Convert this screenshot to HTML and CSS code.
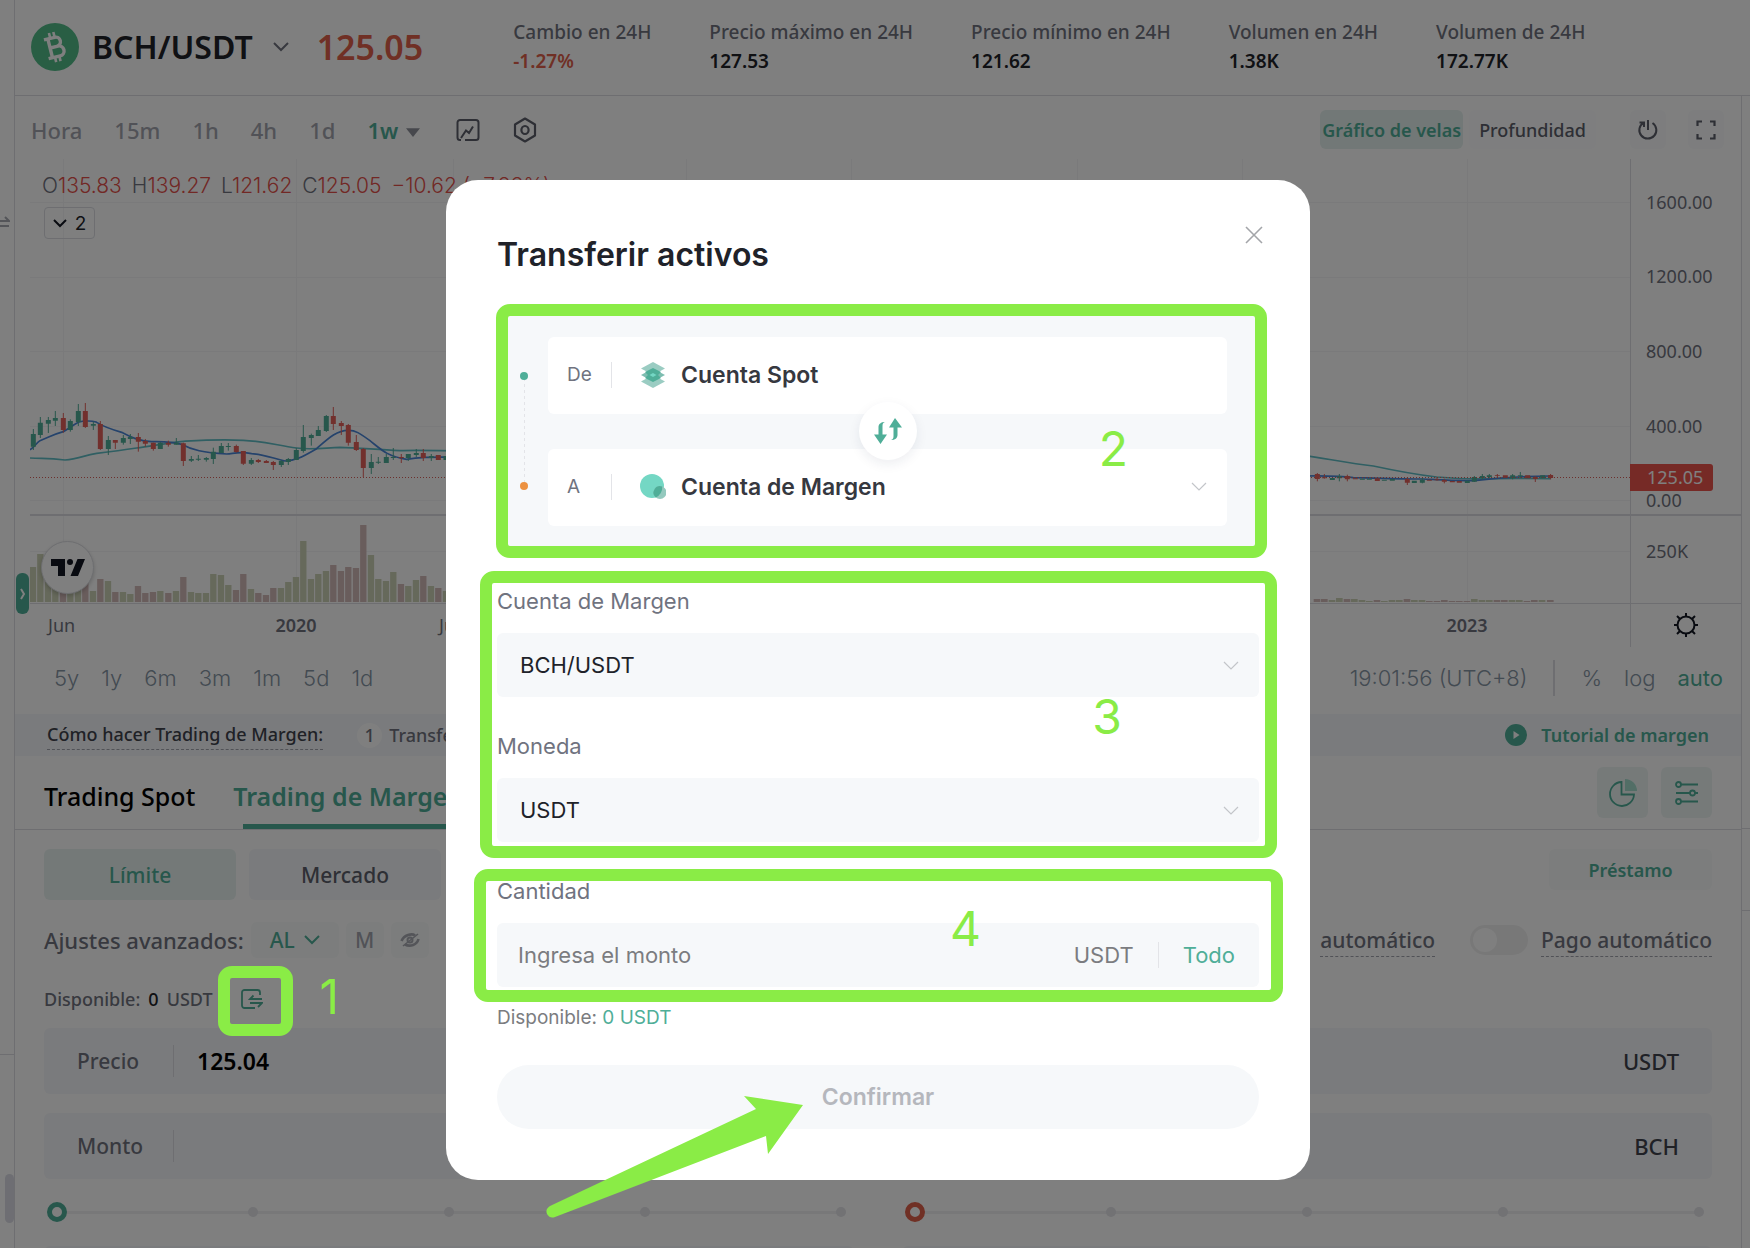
FILE: index.html
```
<!DOCTYPE html>
<html lang="es">
<head>
    <meta charset="UTF-8">
    <meta name="viewport" content="width=device-width, initial-scale=1.0">
    <title>BCH/USDT | Trading de Margen</title>
    <link rel="stylesheet" href="styles.css">
</head>
<body>
    <div class="rail-left">
        <svg class="rail-icon" width="10" height="14" viewBox="0 0 10 14"><path d="M0 5H9L5 1M0 10H9" fill="none" stroke="#a9abb3" stroke-width="2"/></svg>
        <span class="rail-line"></span>
        <span class="rail-thumb"></span>
    </div>

    <div class="page">
        <header class="header">
            <svg class="coin" width="48" height="48" viewBox="0 0 48 48">
                <circle cx="24" cy="24" r="24" fill="#52bc89"/>
                <g transform="rotate(-14 24 24)" fill="none" stroke="#fff" stroke-width="3.4">
                    <path d="M15 14.5H26a4.6 4.6 0 0 1 0 9.3H19M26 23.800h1a5 5 0 0 1 0 10H15M19 14.500V33.800"/>
                    <path d="M21.500 9V14M26 9V14M21.500 34V39M26 34V39" stroke-width="2.6"/>
                </g>
            </svg>
            <h1 class="pair">BCH/USDT</h1>
            <svg class="pair-arrow" width="18" height="12" viewBox="0 0 18 12"><path d="M2 2l7 7 7-7" fill="none" stroke="#70737f" stroke-width="2"/></svg>
            <span class="last-price">125.05</span>
            <dl class="stats">
                <div><dt>Cambio en 24H</dt><dd class="down">-1.27%</dd></div>
                <div><dt>Precio máximo en 24H</dt><dd>127.53</dd></div>
                <div><dt>Precio mínimo en 24H</dt><dd>121.62</dd></div>
                <div><dt>Volumen en 24H</dt><dd>1.38K</dd></div>
                <div><dt>Volumen de 24H</dt><dd>172.77K</dd></div>
            </dl>
        </header>

        <main class="main">
            <div class="toolbar">
                <div class="intervals">
                    <button type="button">Hora</button>
                    <button type="button">15m</button>
                    <button type="button">1h</button>
                    <button type="button">4h</button>
                    <button type="button">1d</button>
                    <button type="button" class="active">1w <svg width="14" height="9" viewBox="0 0 16 10"><path d="M0 0H16L8 10z" fill="#8e919b"/></svg></button>
                </div>
                <button type="button" class="tool" aria-label="Indicadores">
                    <svg width="24" height="24" viewBox="0 0 24 24" fill="none" stroke="#5c5f6b" stroke-width="2"><path d="M5 22H4a2.500 2.500 0 0 1-2.500-2.500V4.500A2.500 2.500 0 0 1 4 2H20a2.500 2.500 0 0 1 2.500 2.500V19.500A2.500 2.500 0 0 1 20 22H9M5 20L10 12.500 13 15 17 8.500"/></svg>
                </button>
                <button type="button" class="tool" aria-label="Ajustes del gráfico">
                    <svg width="24" height="26" viewBox="0 0 24 26" fill="none" stroke="#5c5f6b" stroke-width="2.200"><path d="M12 1.500L22 7.500V18.500L12 24.500 2 18.500V7.500z" stroke-linejoin="round"/><ellipse cx="12" cy="13" rx="3.600" ry="4"/></svg>
                </button>
                <div class="views">
                    <button type="button" class="view active">Gráfico de velas</button>
                    <button type="button" class="view">Profundidad</button>
                    <button type="button" class="square" aria-label="Restablecer">
                        <svg width="22" height="22" viewBox="0 0 22 22" fill="none" stroke="#5c5f6b" stroke-width="2"><path d="M11 1V11M15.500 4a8.500 8.500 0 1 1-9-.2M2.500 3.500H7V8"/></svg>
                    </button>
                    <button type="button" class="square" aria-label="Pantalla completa">
                        <svg width="20" height="20" viewBox="0 0 20 20" fill="none" stroke="#5c5f6b" stroke-width="2.200"><path d="M1.500 6V1.500H6M14 1.500H18.500V6M18.500 14V18.500H14M6 18.500H1.500V14"/></svg>
                    </button>
                </div>
            </div>

            <section class="chart">
                <svg class="chart-svg" viewBox="0 0 1711 488">
                    <!-- grid -->
                    <path d="M33.500 0V444M266.500 0V444M423.500 0V444M656.500 0V444M821.500 0V444M1047.500 0V444M1212.500 0V444M1437.500 0V444M0 43.500H1600M0 118.500H1600M0 192.500H1600M0 267.500H1600M0 341.500H1600M0 392.500H1600" stroke="#f4f4f6" fill="none"/>

                    <!-- volume, left part -->
                    <g transform="translate(-30 221) scale(.3333)" fill="none" stroke-width="19">
                        <path stroke="#ccd2b6" d="M99 666V561M121 666V522M144 666V600M166 666V590M211 666V600M234 666V590M279 666V633M324 666V603M369 666V636M391 666V642M481 666V633M528 666V633M573 666V636M595 666V639M618 666V639M640 666V582M663 666V585M685 666V615M753 666V627M843 666V624M865 666V606M888 666V591M910 666V483M933 666V597M955 666V582M978 666V573M1113 666V525M1135 666V597M1158 666V603M1180 666V576M1225 666V618M1248 666V600M1293 666V618M1338 666V633"/>
                        <path stroke="#d3bab9" d="M189 666V610M256 666V600M301 666V597M346 666V636M414 666V618M436 666V639M459 666V636M505 666V639M550 666V591M708 666V630M730 666V582M775 666V639M798 666V645M820 666V624M1000 666V555M1023 666V573M1045 666V561M1068 666V564M1090 666V435M1203 666V612M1270 666V588M1315 666V624"/>
                    </g>

                    <!-- volume, right part -->
                    <g transform="translate(1260 281) scale(.3333)" fill="none" stroke-width="20">
                        <path stroke="#ccd2b6" d="M126 486V480M148 486V474M193 486V477M216 486V480M238 486V483M283 486V483M306 486V480M328 486V480M373 486V480M396 486V480M553 486V477M576 486V480M598 486V480M666 486V480M688 486V480M756 486V480"/>
                        <path stroke="#d3bab9" d="M81 486V477M103 486V477M171 486V477M261 486V480M351 486V477M418 486V483M441 486V483M463 486V480M486 486V483M508 486V483M531 486V483M621 486V480M643 486V480M711 486V483M733 486V480M781 486V480"/>
                    </g>

                    <!-- moving averages and candles, left part -->
                    <g transform="translate(-30 221) scale(.3333)" fill="none">
                        <path stroke="#60bfc6" stroke-width="5" d="M90 234C125 237 140 233 195 240C235 238 250 226 290 220C340 214 370 210 410 204C450 200 500 188 550 184C600 181 660 177 730 181C800 184 830 196 890 204C930 210 970 204 1020 202C1070 203 1120 208 1200 212C1250 210 1300 212 1400 213"/>
                        <path stroke="#4a86d8" stroke-width="5" d="M90 209C100 205 108 190 120 182C145 173 160 163 190 155C205 147 215 138 235 127C250 122 275 122 288 126C305 136 315 143 365 157C390 170 415 183 455 185C490 184 520 186 545 193C575 210 610 218 680 222C705 220 720 214 755 221C790 224 810 232 855 243C885 242 900 235 950 206C980 180 1010 150 1045 151C1065 150 1080 160 1110 182C1145 210 1160 228 1220 238C1250 232 1280 230 1400 232"/>
                        <path stroke="#4fae98" stroke-width="3" d="M100 147V210M121 111V174M145 111V159M166 93V138M211 118V155M235 72V138M280 125V150M325 168V225M370 165V194M391 162V192M481 186V207M529 174V194M574 228V246M595 225V243M619 231V245M640 203V252M664 189V219M685 189V212M754 234V255M844 240V261M865 234V255M889 204V240M910 135V218M934 161V197M955 138V168M979 105V156M1114 222V282M1135 231V252M1159 222V249M1180 204V240M1225 222V243M1249 207V231M1294 222V243"/>
                        <path stroke="#e4605a" stroke-width="3" d="M190 99V158M256 69V144M301 123V210M346 180V207M415 159V215M436 177V200M460 188V212M505 182V200M550 188V258M709 194V218M730 213V255M775 237V249M799 240V249M820 243V270M1000 81V150M1024 123V165M1045 132V197M1069 165V213M1090 204V291M1204 222V249M1270 207V243"/>
                        <path stroke="#4fae98" stroke-width="15" d="M100 162V200M121 128V165M145 120V131M166 114V122M211 123V150M235 93V126M280 132V137M325 180V207M370 174V188M391 171V177M481 188V207M529 188V194M574 237V242M595 236V239M619 234V239M640 215V237M664 198V219M685 198V201M754 240V251M844 243V255M865 237V246M889 210V240M910 171V213M934 165V174M955 150V168M979 108V153M1114 246V264M1135 245V248M1159 231V249M1180 231V234M1225 222V234M1249 219V225M1294 228V234M1338 228V240"/>
                        <path stroke="#e4605a" stroke-width="15" d="M190 114V150M256 93V141M301 132V207M346 180V188M415 171V185M436 183V191M460 188V207M505 188V194M550 190V243M709 198V216M730 213V251M775 240V246M799 243V249M820 246V255M1000 108V132M1024 129V138M1045 135V188M1069 186V210M1090 207V264M1204 231V234M1270 219V234M1315 225V240"/>
                    </g>

                    <!-- moving averages and candles, right part -->
                    <g transform="translate(1260 281) scale(.3333)" fill="none">
                        <path stroke="#60bfc6" stroke-width="5" d="M40 46C110 56 180 70 250 78C320 93 380 104 440 111C500 116 540 119 600 116C660 114 720 115 782 116"/>
                        <path stroke="#4a86d8" stroke-width="5" d="M40 108C100 107 150 107 190 113C260 114 340 117 400 117C460 120 520 124 560 121C620 114 680 108 782 108"/>
                        <path stroke="#4fae98" stroke-width="3" d="M148 102V124M397 114V130M553 108V126M577 102V119M598 102V114M691 96V114M668 102V118"/>
                        <path stroke="#e4605a" stroke-width="3" d="M82 99V124M103 102V116M172 104V124M352 112V135M441 112V122M463 116V130M622 102V114M736 108V126M782 102V118"/>
                        <path stroke="#4fae98" stroke-width="15" d="M127 114V120M148 109V115M217 116V119M238 116V119M283 119V122M307 117V122M373 122V129M397 119V128M532 122V129M553 111V125M577 108V114M598 106V111M668 106V115M691 106V109M758 106V115"/>
                        <path stroke="#e4605a" stroke-width="15" d="M82 102V117M103 112V115M172 108V118M196 115V118M262 115V123M352 117V128M418 119V122M441 118V121M463 120V125M487 123V127M508 123V128M622 106V108M646 106V113M713 106V115M736 111V117M782 105V114"/>
                    </g>

                    <path d="M0 318.500H1600" stroke="#d8605a" stroke-dasharray="1 2"/>
                    <path d="M0 356H1711" stroke="#dcdde2" stroke-width="2"/>
                    <path d="M0 444.500H1711M1600.500 0V488" stroke="#dcdde2"/>

                    <!-- price scale -->
                    <g class="axis-text">
                        <text x="1616" y="50">1600.00</text>
                        <text x="1616" y="124">1200.00</text>
                        <text x="1616" y="199">800.00</text>
                        <text x="1616" y="274">400.00</text>
                        <text x="1616" y="348">0.00</text>
                        <text x="1616" y="399">250K</text>
                        <text x="18" y="473">Jun</text>
                        <text x="409" y="473">Jun</text>
                    </g>
                    <g class="axis-text axis-year">
                        <text x="266" y="473" text-anchor="middle">2020</text>
                        <text x="1437" y="473" text-anchor="middle">2023</text>
                    </g>
                    <path d="M1600 305H1680a3 3 0 0 1 3 3V329a3 3 0 0 1-3 3H1600z" fill="#ec544d"/>
                    <text class="axis-text axis-last" x="1617" y="325">125.05</text>
                    <g transform="translate(1656 466)" fill="none" stroke="#131722" stroke-width="2">
                        <circle r="8.500"/>
                        <path d="M0-8V-12M0 8V12M-8 0H-12M8 0H12M-6-6L-9-9M6-6L9-9M-6 6L-9 9M6 6L9 9"/>
                    </g>
                </svg>
                <p class="legend"><span>O<b>135.83</b></span><span>H<b>139.27</b></span><span>L<b>121.62</b></span><span>C<b>125.05</b></span><b>−10.62 (−7.83%)</b></p>
                <button type="button" class="legend-toggle"><svg width="14" height="9" viewBox="0 0 14 9"><path d="M1 1l6 6 6-6" fill="none" stroke="#131722" stroke-width="2"/></svg>2</button>
                <a class="tv-logo" href="#" aria-label="TradingView">
                    <svg width="34" height="17" viewBox="0 0 34 17" fill="#131722"><path d="M0 0H14V17H7V7H0zM26.500 0H34L27 17H19.500z"/><circle cx="19" cy="3" r="3"/></svg>
                </a>
                <button type="button" class="drawer" aria-label="Mostrar herramientas"><svg width="6" height="12" viewBox="0 0 6 12"><path d="M1 1l3 5-3 5" fill="none" stroke="#fff" stroke-width="2"/></svg></button>
            </section>

            <div class="ranges">
                <button type="button">5y</button>
                <button type="button">1y</button>
                <button type="button">6m</button>
                <button type="button">3m</button>
                <button type="button">1m</button>
                <button type="button">5d</button>
                <button type="button">1d</button>
                <span class="clock">19:01:56 (UTC+8)</span>
                <button type="button">%</button>
                <button type="button">log</button>
                <button type="button" class="active">auto</button>
            </div>

            <div class="guide">
                <span class="guide-title">Cómo hacer Trading de Margen:</span>
                <span class="guide-step">1</span>
                <span>Transferir</span>
                <a class="guide-link" href="#">
                    <svg width="22" height="22" viewBox="0 0 22 22"><circle cx="11" cy="11" r="11" fill="#4fae98"/><path d="M8.500 7L14.500 11 8.500 15z" fill="#fff"/></svg>
                    Tutorial de margen
                </a>
            </div>

            <nav class="tabs">
                <button type="button" class="tab">Trading Spot</button>
                <button type="button" class="tab active">Trading de Margen</button>
                <div class="tab-tools">
                    <button type="button" aria-label="Cartera">
                        <svg width="28" height="28" viewBox="0 0 28 28"><path d="M12.500 3A12 12 0 1 0 25 15.500H12.500z" fill="none" stroke="#4fae98" stroke-width="1.800"/><path d="M16 0A12 12 0 0 1 28 12H16z" fill="#a5dccd"/></svg>
                    </button>
                    <button type="button" aria-label="Preferencias">
                        <svg width="24" height="24" viewBox="0 0 24 24" fill="none" stroke="#4fae98" stroke-width="1.800"><path d="M6 3.500H23M1 12H15M20 12H23M6 20.500H23"/><circle cx="3.500" cy="3.500" r="2.500"/><circle cx="17.500" cy="12" r="2.500"/><circle cx="3.500" cy="20.500" r="2.500"/></svg>
                    </button>
                </div>
            </nav>

            <section class="trade">
                <div class="order-types">
                    <button type="button" class="order-type active">Límite</button>
                    <button type="button" class="order-type">Mercado</button>
                    <button type="button" class="loan">Préstamo</button>
                </div>
                <div class="advanced">
                    <span class="advanced-title">Ajustes avanzados:</span>
                    <button type="button" class="chip chip-al">AL <svg width="16" height="10" viewBox="0 0 16 10"><path d="M1 1l7 7 7-7" fill="none" stroke="#4fae98" stroke-width="2"/></svg></button>
                    <button type="button" class="chip">M</button>
                    <button type="button" class="chip" aria-label="Ocultar">
                        <svg width="20" height="14" viewBox="0 0 20 14" fill="none" stroke="#a9abb3" stroke-width="2.600"><path d="M1.500 8C4 2 12 0 15 2.500M5 11.500C10 14 17 12 18.500 6"/><path d="M3 13L18 1" stroke-width="1.600"/><circle cx="10" cy="7" r="2.500" stroke-width="2"/></svg>
                    </button>
                    <div class="auto">
                        <label class="switch"><input type="checkbox"><span>automático</span></label>
                        <label class="switch"><input type="checkbox"><span>Pago automático</span></label>
                    </div>
                </div>

                <div class="forms">
                    <form class="form">
                        <div class="available">Disponible: <b>0</b> USDT
                            <button type="button" class="transfer" aria-label="Transferir">
                                <svg width="22" height="20" viewBox="0 0 22 20" fill="none" stroke="#4fae98" stroke-width="1.800"><path d="M19 6V3.500A2.500 2.500 0 0 0 16.500 1H3.500A2.500 2.500 0 0 0 1 3.500V16.500A2.500 2.500 0 0 0 3.500 19H14"/><path d="M21 10H9L12.500 6.500M9 14H21L17 18"/></svg>
                                <span class="mark mark-transfer"></span>
                                <span class="mark-number number-1">1</span>
                            </button>
                        </div>
                        <div class="field"><label for="price">Precio</label><input id="price" type="text" value="125.04"></div>
                        <div class="field"><label for="amount">Monto</label><input id="amount" type="text"></div>
                        <div class="slider">
                            <div class="ticks"><i></i><i></i><i></i><i></i><i></i></div>
                            <input type="range" min="0" max="100" value="0" aria-label="Porcentaje de compra">
                        </div>
                        <div class="field"><input type="text" aria-label="Total de compra"></div>
                    </form>
                    <form class="form">
                        <div class="available"></div>
                        <div class="field"><input type="text" aria-label="Precio de venta"><span>USDT</span></div>
                        <div class="field"><input type="text" aria-label="Monto de venta"><span>BCH</span></div>
                        <div class="slider sell">
                            <div class="ticks"><i></i><i></i><i></i><i></i><i></i></div>
                            <input type="range" min="0" max="100" value="0" aria-label="Porcentaje de venta">
                        </div>
                        <div class="field"><input type="text" aria-label="Total de venta"></div>
                    </form>
                </div>
            </section>
        </main>
    </div>

    <div class="rail-right"><span></span></div>

    <div class="overlay">
        <div class="modal" role="dialog" aria-labelledby="modal-title">
            <button type="button" class="close" aria-label="Cerrar"><svg width="18" height="18" viewBox="0 0 18 18"><path d="M1 1L17 17M17 1L1 17" fill="none" stroke="#a3a5a9" stroke-width="1.600"/></svg></button>
            <h2 id="modal-title">Transferir activos</h2>

            <div class="accounts">
                <div class="route"><i class="from"></i><i class="to"></i></div>
                <div class="account">
                    <span class="way">De</span>
                    <svg width="26" height="26" viewBox="0 0 26 26">
                        <path d="M13 0L25 6.500 13 13 1 6.500z" fill="#9accc2"/>
                        <path d="M13 13L25 19.500 13 26 1 19.500z" fill="#9accc2"/>
                        <path d="M13 6.500L25 13 13 19.500 1 13z" fill="#7dbdb0"/>
                        <path d="M13 6L21 10 18 13 21 16 13 20 5 16 8 13 5 10z" fill="#4fae98"/>
                        <path d="M13 11L16.500 13 13 15 9.500 13z" fill="#74d7c4"/>
                    </svg>
                    <strong>Cuenta Spot</strong>
                </div>
                <div class="account">
                    <label class="way" for="to-account">A</label>
                    <svg width="26" height="26" viewBox="0 0 26 26">
                        <circle cx="12" cy="12" r="12" fill="#74d7c4"/>
                        <circle cx="20" cy="18.500" r="6.500" fill="#94c9be"/>
                        <path d="M22.300 12.400A12 12 0 0 1 15.800 23.400A6.500 6.500 0 0 1 22.300 12.400" fill="#4fae98"/>
                    </svg>
                    <select id="to-account"><option>Cuenta de Margen</option></select>
                    <svg class="arrow" width="16" height="9" viewBox="0 0 16 9"><path d="M1 1l7 7 7-7" fill="none" stroke="#c3c5c9" stroke-width="1.200"/></svg>
                </div>
                <button type="button" class="swap" aria-label="Intercambiar cuentas">
                    <svg width="28" height="26" viewBox="0 0 28 26" fill="#4fae98"><path d="M11 4C9 4.500 8.500 6 8.500 8V16.500H13L6.500 26 0 16.500H4.500V9C4.500 6 7 4 11 4zM17 22C19 21.500 19.500 20 19.500 18V9.500H15L21 0 28 9.500H23.500V17C23.500 20 21 22 17 22z"/></svg>
                </button>
                <span class="mark mark-accounts"></span>
                <span class="mark-number number-2">2</span>
            </div>

            <div class="pickers">
                <label for="margin-account">Cuenta de Margen</label>
                <div class="picker">
                    <select id="margin-account"><option>BCH/USDT</option></select>
                    <svg class="arrow" width="16" height="9" viewBox="0 0 16 9"><path d="M1 1l7 7 7-7" fill="none" stroke="#c3c5c9" stroke-width="1.200"/></svg>
                </div>
                <label for="coin">Moneda</label>
                <div class="picker">
                    <select id="coin"><option>USDT</option></select>
                    <svg class="arrow" width="16" height="9" viewBox="0 0 16 9"><path d="M1 1l7 7 7-7" fill="none" stroke="#c3c5c9" stroke-width="1.200"/></svg>
                </div>
                <span class="mark mark-pickers"></span>
                <span class="mark-number number-3">3</span>
            </div>

            <div class="quantity">
                <label for="quantity">Cantidad</label>
                <div class="picker">
                    <input id="quantity" type="text" placeholder="Ingresa el monto">
                    <span class="unit">USDT</span>
                    <button type="button" class="all">Todo</button>
                </div>
                <span class="mark mark-quantity"></span>
                <span class="mark-number number-4">4</span>
            </div>

            <p class="balance">Disponible: <a href="#">0 USDT</a></p>
            <div class="submit">
                <button type="submit" class="confirm" disabled>Confirmar</button>
                <svg class="mark-arrow" width="258" height="124" viewBox="0 0 258 124"><path d="M257 10L198 1 210 14 4 111Q-1 114 1 119 4 124 9 122L220 41 222 59z" fill="#8aec46"/></svg>
            </div>
        </div>
    </div>
</body>
</html>
```

FILE: styles.css
```
* {
    box-sizing: border-box;
    margin: 0;
    padding: 0;
}

body {
    display: flex;
    height: 100vh;
    overflow: hidden;
    background-color: #fff;
    color: #202229;
    font-family: 'Noto Sans', 'Open Sans', sans-serif;
    font-size: 18px;
    font-weight: 500;
}

button, input, select {
    border: none;
    background: none;
    color: inherit;
    font: inherit;
    outline: none;
}

svg {
    flex: none;
}

a {
    text-decoration: none;
}

/* side rails */
.rail-left {
    position: relative;
    width: 15px;
    flex: none;
    border-right: 1px solid #dcdde2;
}

.rail-icon {
    position: absolute;
    top: 216px;
    left: 0;
}

.rail-line {
    position: absolute;
    top: 1054px;
    left: 0;
    width: 14px;
    height: 1px;
    background-color: #dcdde2;
}

.rail-thumb {
    position: absolute;
    top: 1174px;
    left: 5px;
    width: 9px;
    height: 49px;
    border-radius: 5px;
    background-color: #dcdde6;
}

.rail-right {
    width: 9px;
    flex: none;
    margin-top: 95px;
    border-top: 1px solid #dcdde2;
    border-left: 1px solid #dcdde2;
}

.rail-right span {
    display: block;
    height: 83px;
    margin-top: 732px;
    border: solid #dcdde2;
    border-width: 1px 0;
}

.page {
    flex: 1;
    min-width: 0;
    overflow: hidden;
}

/* header */
.header {
    display: flex;
    align-items: center;
    height: 96px;
    padding: 0 16px 2px;
    border-bottom: 1px solid #dcdde2;
    white-space: nowrap;
}

.pair {
    margin-left: 13px;
    font-size: 32px;
    font-weight: 600;
}

.pair-arrow {
    margin-left: 19px;
}

.last-price {
    margin-left: 27px;
    color: #e0604a;
    font-size: 34px;
    font-weight: 600;
}

.stats {
    display: flex;
    gap: 58px;
    margin-left: 90px;
    font-size: 19px;
    line-height: 29px;
}

.stats dt {
    color: #70737f;
}

.stats dd {
    font-weight: 600;
}

.stats .down {
    color: #e0604a;
}

/* chart toolbar */
.toolbar {
    display: flex;
    align-items: center;
    height: 63px;
    padding: 4px 17px 0 16px;
}

.intervals {
    display: flex;
    gap: 32px;
    margin-right: 36px;
    color: #a3a5ae;
    font-size: 22px;
}

.intervals .active {
    color: #4fae98;
    font-weight: 600;
}

.intervals svg {
    margin-left: 2px;
    vertical-align: 2px;
}

.tool {
    display: flex;
    margin-right: 33px;
}

.views {
    display: flex;
    margin-left: auto;
}

.view {
    height: 39px;
    margin-right: 12px;
    padding: 0 10px;
    border-radius: 6px;
    background-color: #fdfdfe;
    color: #5c5f6b;
}

.view.active {
    margin-right: 6px;
    padding: 0 2px;
    background-color: #e4f0ee;
    color: #4fae98;
    font-weight: 600;
}

.square {
    display: flex;
    align-items: center;
    justify-content: center;
    width: 36px;
    height: 39px;
    margin-left: 22px;
    border-radius: 6px;
    background-color: #fafbfd;
}

/* chart */
.chart {
    position: relative;
    padding-left: 15px;
}

.chart-svg {
    display: block;
    width: 100%;
}

.axis-text {
    fill: #70737f;
    font-size: 18px;
    font-weight: 400;
}

.axis-year {
    font-weight: 600;
}

.axis-last {
    fill: #fff;
}

.legend {
    position: absolute;
    top: 14px;
    left: 27px;
    display: flex;
    gap: 10px;
    color: #70737f;
    font-family: 'Inter', sans-serif;
    font-size: 21px;
    font-weight: 300;
    line-height: 26px;
}

.legend b {
    color: #e4504a;
    font-weight: 300;
}

.legend-toggle {
    position: absolute;
    top: 48px;
    left: 29px;
    display: flex;
    align-items: center;
    justify-content: center;
    gap: 8px;
    width: 51px;
    height: 32px;
    border: 1px solid #dcdde2;
    border-radius: 4px;
    font-family: 'Inter', sans-serif;
    font-size: 19px;
    font-weight: 400;
}

.tv-logo {
    position: absolute;
    top: 382px;
    left: 26px;
    display: flex;
    align-items: center;
    justify-content: center;
    width: 53px;
    height: 53px;
    border: 1px solid #dcdde2;
    border-radius: 50%;
    background-color: #fff;
    box-shadow: 0 2px 4px rgba(0, 0, 0, 0.2);
}

.drawer {
    position: absolute;
    top: 414px;
    left: 1px;
    display: flex;
    align-items: center;
    justify-content: center;
    width: 13px;
    height: 41px;
    border-radius: 6px;
    background-color: #4fae98;
}

.ranges {
    display: flex;
    align-items: center;
    gap: 22px;
    height: 67px;
    padding: 0 18px 6px 39px;
    color: #8796a5;
    font-family: 'Inter', sans-serif;
    font-size: 22px;
    font-weight: 300;
}

.ranges .active {
    color: #4fae98;
    font-weight: 400;
}

.clock {
    margin-left: auto;
    padding-right: 26px;
    border-right: 2px solid #dcdde2;
    line-height: 36px;
}

.ranges .clock + button {
    margin-left: 4px;
}

/* margin guide */
.guide {
    display: flex;
    align-items: center;
    height: 42px;
    padding: 0 32px;
    background-color: #f5f7fa;
    color: #70737f;
}

.guide-title {
    margin-right: 34px;
    border-bottom: 1px dashed #a3a5ae;
    color: #40434d;
    line-height: 29px;
}

.guide-step {
    width: 25px;
    margin-right: 7px;
    border-radius: 50%;
    background-color: #fff;
    line-height: 25px;
    text-align: center;
}

.guide-link {
    display: flex;
    align-items: center;
    gap: 14px;
    margin-left: auto;
    color: #4fae98;
    font-weight: 600;
}

/* spot / margin tabs */
.tabs {
    display: flex;
    height: 74px;
    padding: 0 29px;
    border-bottom: 1px solid #dcdde2;
    font-size: 25px;
}

.tab {
    margin-right: 38px;
    padding-top: 7px;
    color: #000;
    font-weight: 500;
}

.tab.active {
    position: relative;
    color: #4fae98;
    font-weight: 600;
}

.tab.active::after {
    content: '';
    position: absolute;
    right: 10px;
    bottom: 0;
    left: 10px;
    height: 5px;
    background-color: #4fae98;
}

.tab-tools {
    display: flex;
    gap: 13px;
    margin-top: 11px;
    margin-left: auto;
}

.tab-tools button {
    display: flex;
    align-items: center;
    justify-content: center;
    width: 51px;
    height: 51px;
    border-radius: 6px;
    background-color: #edf5f3;
}

/* order form */
.trade {
    padding: 19px 29px 0;
}

.order-types {
    display: flex;
    gap: 13px;
    font-size: 21px;
}

.order-type {
    width: 192px;
    height: 51px;
    border-radius: 6px;
    background-color: #f5f7fa;
    color: #5c5f6b;
}

.order-type.active {
    background-color: #e9f3f1;
    color: #4fae98;
}

.loan {
    width: 163px;
    height: 41px;
    margin-left: auto;
    border-radius: 6px;
    background-color: #f8fbfa;
    color: #4fae98;
    font-size: 18px;
    font-weight: 600;
}

.advanced {
    display: flex;
    align-items: center;
    gap: 7px;
    height: 36px;
    margin-top: 22px;
    color: #70737f;
    font-size: 21px;
}

.advanced-title {
    font-size: 22px;
}

.chip {
    display: flex;
    align-items: center;
    justify-content: center;
    min-width: 38px;
    height: 36px;
    border-radius: 6px;
    background-color: #f8fbfa;
    color: #a3a5ae;
}

.chip-al {
    gap: 9px;
    width: 88px;
    color: #4fae98;
}

.auto {
    display: flex;
    gap: 35px;
    margin-left: auto;
}

.switch {
    display: flex;
    align-items: center;
    gap: 13px;
}

.switch span {
    border-bottom: 1px dashed #a3a5ae;
    line-height: 32px;
}

.switch input {
    display: flex;
    align-items: center;
    width: 58px;
    height: 30px;
    padding: 0 3px;
    appearance: none;
    border-radius: 15px;
    background-color: #f1f1f1;
}

.switch input::before {
    content: '';
    width: 24px;
    height: 24px;
    border-radius: 50%;
    background-color: #fff;
}

.switch input:checked {
    justify-content: flex-end;
    background-color: #4fae98;
}

.forms {
    display: grid;
    grid-template-columns: 1fr 1fr;
    gap: 48px;
    margin-top: 24px;
}

.available {
    display: flex;
    align-items: center;
    gap: 8px;
    height: 34px;
    margin-bottom: 12px;
    color: #70737f;
}

.available b {
    color: #202229;
    font-weight: 500;
}

.transfer {
    position: relative;
    display: flex;
    margin-left: 20px;
}

.field {
    display: flex;
    align-items: center;
    height: 66px;
    margin-bottom: 19px;
    padding: 0 33px;
    border-radius: 6px;
    background-color: #f5f7fa;
    color: #40434d;
    font-size: 22px;
}

.field label {
    width: 97px;
    border-right: 1px solid #dcdde2;
    color: #70737f;
    font-size: 21px;
    line-height: 32px;
}

.field input {
    flex: 1;
    min-width: 0;
    padding-left: 23px;
    color: #000;
    font-size: 23px;
    font-weight: 600;
}

.slider {
    display: grid;
    align-items: center;
    height: 28px;
    margin: 0 3px 20px;
}

.ticks, .slider input {
    grid-area: 1 / 1;
}

.ticks {
    display: flex;
    justify-content: space-between;
    padding: 0 5px;
    background: linear-gradient(#f0f0f2, #f0f0f2) center / calc(100% - 20px) 3px no-repeat;
}

.ticks i {
    width: 10px;
    height: 10px;
    border-radius: 50%;
    background-color: #e4e4e9;
}

.slider input {
    width: 100%;
    height: 20px;
    appearance: none;
}

.slider input::-webkit-slider-thumb {
    width: 20px;
    height: 20px;
    appearance: none;
    border: 5px solid #4fae98;
    border-radius: 50%;
    background-color: #fff;
}

.sell input::-webkit-slider-thumb {
    border-color: #e0604a;
}

/* transfer modal */
.overlay {
    position: fixed;
    inset: 0;
    z-index: 10;
    display: flex;
    align-items: flex-start;
    justify-content: center;
    padding: 180px 0 0 6px;
    background-color: rgba(0, 0, 0, 0.5);
}

.modal {
    position: relative;
    width: 864px;
    padding: 55px 51px 51px;
    border-radius: 32px;
    background-color: #fff;
    font-family: 'Inter', sans-serif;
    font-size: 22px;
    font-weight: 400;
}

.modal h2 {
    font-size: 32px;
    font-weight: 600;
    line-height: 40px;
}

.close {
    position: absolute;
    top: 46px;
    right: 47px;
    display: flex;
}

.accounts {
    position: relative;
    display: grid;
    gap: 35px;
    margin-top: 35px;
    padding: 27px 32px 26px 51px;
    background-color: #f6f8fa;
}

.account {
    display: flex;
    align-items: center;
    height: 77px;
    padding: 0 20px 2px 19px;
    border-radius: 6px;
    background-color: #fff;
    color: #36383f;
    font-size: 23px;
}

.account strong, .account select {
    margin-left: 15px;
    font-weight: 600;
}

.way {
    width: 45px;
    margin-right: 28px;
    border-right: 1px solid #e3e4e8;
    color: #70737f;
    font-size: 19px;
    line-height: 26px;
}

.route {
    position: absolute;
    top: 62px;
    left: 23px;
    display: flex;
    flex-direction: column;
    justify-content: space-between;
    width: 8px;
    height: 118px;
    background: repeating-linear-gradient(#e3e4e8 0 3px, transparent 3px 6px) center / 1px 100% no-repeat;
}

.route i {
    height: 8px;
    border-radius: 50%;
}

.route .from {
    background-color: #4fae98;
}

.route .to {
    background-color: #ec9140;
}

.swap {
    position: absolute;
    top: 92px;
    left: 362px;
    display: flex;
    align-items: center;
    justify-content: center;
    width: 58px;
    height: 58px;
    border-radius: 50%;
    background-color: #fff;
    box-shadow: 0 4px 12px rgba(30, 40, 80, 0.08);
}

.modal select {
    flex: 1;
    appearance: none;
    opacity: 1;
}

.pickers, .quantity {
    position: relative;
}

.pickers label, .quantity label {
    display: block;
    padding: 35px 0 18px;
    color: #70737f;
    line-height: 28px;
}

.picker {
    display: flex;
    align-items: center;
    height: 64px;
    padding: 0 20px 0 23px;
    border-radius: 6px;
    background-color: #f6f8fa;
}

.picker input {
    flex: 1;
    min-width: 0;
    margin-left: -2px;
}

.picker input::placeholder {
    color: #7b7c80;
    opacity: 1;
}

.unit {
    padding-right: 24px;
    border-right: 1px solid #e3e4e8;
    color: #7b7c80;
    line-height: 26px;
}

.all {
    margin: 0 4px 0 24px;
    color: #4fae98;
}

.balance {
    margin-top: 19px;
    color: #7b7c80;
    font-size: 19px;
    line-height: 24px;
}

.balance a {
    color: #4fae98;
}

.submit {
    position: relative;
    margin-top: 35px;
}

.confirm {
    display: block;
    width: 100%;
    height: 64px;
    border-radius: 32px;
    background-color: #f6f8fa;
    color: #b5b7bd;
    font-size: 23px;
    font-weight: 600;
}

/* tutorial marks */
.mark {
    position: absolute;
    border: 12px solid #8aec46;
    border-radius: 14px;
    pointer-events: none;
}

.mark-number {
    position: absolute;
    color: #8aec46;
    font-family: 'Inter', sans-serif;
    font-size: 48px;
    font-weight: 400;
    line-height: 48px;
}

.mark-transfer {
    z-index: 20;
    top: -23px;
    left: -23px;
    width: 75px;
    height: 70px;
}

.number-1 {
    z-index: 20;
    top: -16px;
    left: 79px;
}

.mark-accounts {
    inset: -6px -8px -6px -1px;
}

.number-2 {
    right: 131px;
    bottom: 79px;
}

.mark-pickers {
    inset: 19px -18px -16px -17px;
}

.number-3 {
    right: 137px;
    bottom: 101px;
}

.mark-quantity {
    inset: 27px -24px -15px -23px;
}

.number-4 {
    right: 278px;
    bottom: 34px;
}

.mark-arrow {
    position: absolute;
    top: 30px;
    left: 49px;
}
```
